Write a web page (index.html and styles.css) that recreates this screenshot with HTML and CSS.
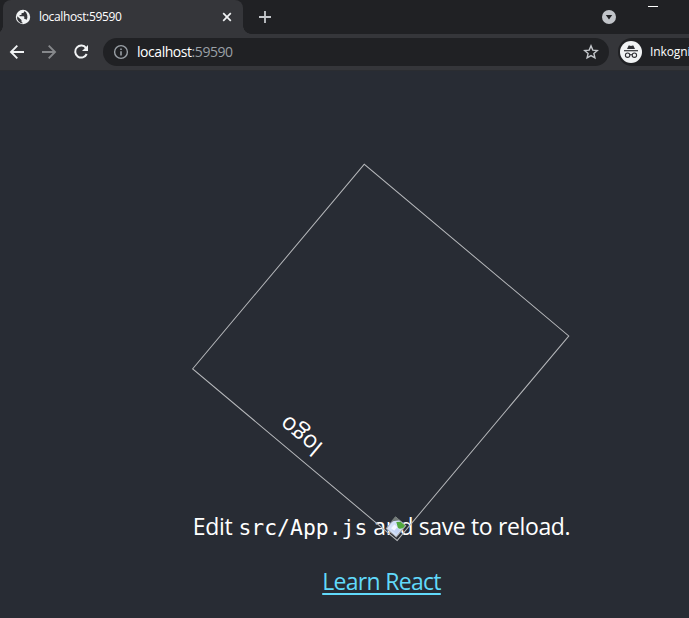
FILE: index.html
```html
<!DOCTYPE html>
<html lang="de">
<head>
<meta charset="utf-8">
<title>localhost:59590</title>
<link rel="stylesheet" href="styles.css">
</head>
<body>
<div class="tabs">
  <div class="tab">
    <svg class="globe" width="16" height="16" viewBox="0 0 16 16"><circle cx="8" cy="8" r="7.2" fill="#f1f3f4"/><path d="M2.2 7.2 6.5 11v1.4c0 .6.5 1 1 1.2v.8A6 6 0 0 1 2.2 7.2ZM9.2 2.1v.5c0 .7-.5 1.3-1.2 1.3H6.6v1.3c0 .4-.3.7-.7.7H4.6v1.4h4c.4 0 .7.3.7.7v2H10c.6 0 1.1.4 1.3.9A6 6 0 0 0 9.2 2.1Z" fill="#35363a"/></svg>
    <span class="title">localhost:59590</span>
    <svg class="close" width="10" height="10" viewBox="0 0 10 10"><path d="m1.2 1.2 7.6 7.6m0-7.6L1.2 8.8" stroke="#f1f3f4" stroke-width="1.7"/></svg>
  </div>
  <svg class="plus" width="12" height="12" viewBox="0 0 12 12"><path d="M6 0v12M0 6h12" stroke="#c4c7cb" stroke-width="1.8"/></svg>
  <svg class="search" width="14" height="14" viewBox="0 0 14 14"><circle cx="7" cy="7" r="7" fill="#c1c4c9"/><path d="M3.8 5h6.4L7 9.4Z" fill="#202124"/></svg>
  <span class="minimize"></span>
</div>
<div class="toolbar">
  <svg class="nav" width="16" height="16" viewBox="0 0 16 16"><path d="M15 8H2.3M8.3 1.7 2 8l6.3 6.3" fill="none" stroke="#f1f3f4" stroke-width="1.9"/></svg>
  <svg class="nav" width="16" height="16" viewBox="0 0 16 16"><path d="M1 8h12.7M7.7 1.7 14 8l-6.3 6.3" fill="none" stroke="#86888b" stroke-width="1.9"/></svg>
  <svg class="nav" width="16" height="16" viewBox="0 0 16 16"><path d="M13.1 4.1A6 6 0 1 0 13.7 10" fill="none" stroke="#f1f3f4" stroke-width="2"/><path d="M15 1v6H9Z" fill="#f1f3f4"/></svg>
  <div class="address">
    <svg width="16" height="16" viewBox="0 0 16 16"><circle cx="8" cy="8" r="6.4" fill="none" stroke="#9aa0a6" stroke-width="1.4"/><path d="M8 7.2v4.2M8 4.4v1.5" stroke="#9aa0a6" stroke-width="1.6"/></svg>
    <span class="url">localhost<span class="port">:59590</span></span>
    <svg class="star" width="16" height="16" viewBox="0 0 16 16"><path d="m8 1.9 1.8 4.2 4.5.4-3.4 3 1 4.4L8 11.6l-3.9 2.3 1-4.4-3.4-3 4.5-.4Z" fill="none" stroke="#c4c7cb" stroke-width="1.4"/></svg>
  </div>
  <div class="profile">
    <svg width="22" height="22" viewBox="0 0 22 22"><circle cx="11" cy="11" r="11" fill="#f1f3f4"/><path d="m7 8 1.4-3.1c.2-.5.6-.5 1-.4l1.6.4 1.6-.4c.4-.1.8-.1 1 .4L15 8Z" fill="#303135"/><path d="M4 9.7h14" stroke="#303135" stroke-width="1.2"/><g fill="none" stroke="#303135" stroke-width="1.1"><circle cx="7.6" cy="14.2" r="2.2"/><circle cx="14.4" cy="14.2" r="2.2"/><path d="M9.8 13.9q1.2-.7 2.4 0"/></g></svg>
    <span class="name">Inkognito</span>
  </div>
</div>
<header class="app">
  <div class="logo">
    <svg class="broken" width="16" height="16" viewBox="0 0 16 16"><path d="M1.5.5h13v15h-13Z" fill="#d3e0f8" stroke="#a6a8ab"/><path d="M3 3h6v5H3Z" fill="#c3d3f3"/><path d="M7 4h4v5H7Z" fill="#f3f7ff"/><path d="M2 15v-3c2-4 4-4 6-2l3 2-3 3Z" fill="#51a83c"/><path d="M15.5 9v7H9Z" fill="#737b78"/></svg>
    <span class="alt">logo</span>
  </div>
  <p class="edit"><span class="w1">Edit</span> <code>src/App.js</code> <span class="w2">and save to reload.</span></p>
  <a class="learn">Learn React</a>
</header>
</body>
</html>
```
FILE: styles.css
```css
* { box-sizing: border-box; }
body {
  margin: 0;
  width: 689px;
  height: 618px;
  overflow: hidden;
  background: #282c34;
  color: #fff;
  font-family: "Open Sans", "Noto Sans", sans-serif;
}
svg { display: block; flex: none; }
.tabs {
  display: flex;
  align-items: center;
  height: 34px;
  background: #202124;
}
.tab {
  position: relative;
  display: flex;
  align-items: center;
  width: 240px;
  height: 34px;
  margin-left: 3px;
  padding: 0 11px 0 12px;
  border-radius: 8px 8px 0 0;
  background: #35363a;
}
.tab::after, .tab::before {
  content: "";
  position: absolute;
  bottom: 0;
  width: 8px;
  height: 8px;
}
.tab::after { left: 100%; background: radial-gradient(circle at 100% 0, transparent 7.5px, #35363a 8px); }
.tab::before { right: 100%; background: radial-gradient(circle at 0 0, transparent 7.5px, #35363a 8px); }
.title {
  margin-left: 8px;
  font-size: 12px;
  letter-spacing: -0.35px;
  line-height: 16px;
}
.close { margin-left: auto; }
.plus { margin-left: 16px; }
.search { margin-left: 331px; }
.minimize {
  align-self: flex-start;
  width: 10px;
  height: 1px;
  margin: 6px 0 0 32px;
  background: #fff;
}
.toolbar {
  display: flex;
  align-items: center;
  height: 37px;
  padding: 0 0 1px 9px;
  border-bottom: 1px solid #2b2d31;
  background: #35363a;
}
.nav { margin-right: 16px; }
.address {
  display: flex;
  flex: none;
  align-items: center;
  width: 506px;
  height: 28px;
  margin-left: -2px;
  padding: 0 10px;
  border-radius: 14px;
  background: #202124;
}
.url {
  margin-left: 8px;
  font-size: 14px;
  letter-spacing: -0.45px;
  line-height: 20px;
}
.port { color: #9aa0a6; }
.star { margin-left: auto; }
.profile {
  display: flex;
  align-items: center;
  flex: none;
  width: 100px;
  height: 28px;
  margin-left: 9px;
  padding-left: 2px;
  border-radius: 14px;
  background: #202124;
}
.name { margin-left: 8px; font-size: 12px; letter-spacing: -0.1px; }
.app {
  display: flex;
  flex-direction: column;
  align-items: center;
  height: 547px;
  padding: 148px 0 0 74px;
}
.logo {
  position: relative;
  z-index: 1;
  display: flex;
  flex: none;
  width: 267.5px;
  height: 267.5px;
  margin-left: -1px;
  border: 1px solid #b5b7ba;
  transform: rotate(220deg);
}
.broken { position: absolute; left: 1px; top: 1px; }
.alt {
  width: 100%;
  padding-left: 16px;
  font-size: 23.5px;
  line-height: 34px;
  text-align: center;
}
.edit {
  display: flex;
  align-items: baseline;
  margin: 23px 0 0;
  font-size: 23px;
  line-height: 32px;
  white-space: nowrap;
}
code {
  margin: 0 6px;
  font-family: "DejaVu Sans Mono", monospace;
  font-size: 21.4px;
}
.w1 { letter-spacing: -0.3px; }
.w2 { letter-spacing: -0.37px; }
.learn {
  margin-top: 21px;
  color: #61dafb;
  font-size: 23px;
  letter-spacing: -0.7px;
  line-height: 32px;
  text-decoration: underline;
  text-decoration-thickness: 2px;
  text-underline-offset: 3px;
}
```
